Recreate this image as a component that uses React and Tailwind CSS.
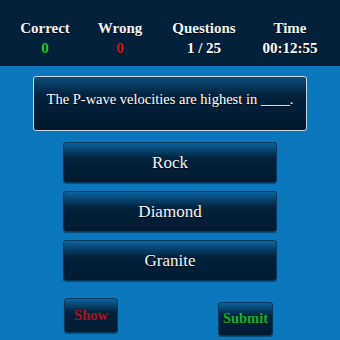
import React from 'react';

const stats = [
  { label: 'Correct', value: '0', color: 'text-[#19d11f]' },
  { label: 'Wrong', value: '0', color: 'text-[#e01010]' },
  { label: 'Questions', value: '1 / 25', color: 'text-white' },
  { label: 'Time', value: '00:12:55', color: 'text-white' },
];

const options = ['Rock', 'Diamond', 'Granite'];

function App() {
  return (
    <div className="w-[340px] h-[340px] overflow-hidden bg-[#0b77bd] font-['Liberation_Serif',serif]">
      {/* Header */}
      <div className="h-[66px] bg-[#03213b] border-b border-[#021628] grid grid-cols-[90px_60px_108px_64px] pt-[18px]">
        {stats.map((s) => (
          <div key={s.label} className="flex flex-col items-center font-bold text-[15px] leading-[20px] [text-shadow:0_1px_1px_rgba(0,0,0,0.7)]">
            <span className="text-[#f2f2f2]">{s.label}</span>
            <span className={s.color}>{s.value}</span>
          </div>
        ))}
      </div>

      {/* Question */}
      <div className="mx-[33px] mt-[10px] h-[55px] rounded-[3px] border border-[#c9d6e0] bg-gradient-to-b from-[#0a4d7c] via-[#03223d] via-35% to-[#02192d] flex pt-[12px] justify-center">
        <p className="text-white text-[14.5px] leading-[20px] [text-shadow:0_1px_1px_rgba(0,0,0,0.8)]">
          The P-wave velocities are highest in ____.
        </p>
      </div>

      {/* Options */}
      <div className="flex flex-col items-center gap-[8px] mt-[11px]">
        {options.map((o) => (
          <button
            key={o}
            className="w-[214px] h-[41px] rounded-[3px] border border-[#073a5f] bg-gradient-to-b from-[#0c64a0] via-[#03223d] via-40% to-[#021b31] text-[#f4f4f4] text-[17px] [text-shadow:0_1px_1px_rgba(0,0,0,0.8)] shadow-[0_1px_1px_rgba(0,0,0,0.35)]"
          >
            {o}
          </button>
        ))}
      </div>

      {/* Actions */}
      <div className="flex justify-between items-start w-[209px] ml-[64px] mt-[17px]">
        <button className="w-[54px] h-[35px] rounded-[3px] border border-[#073a5f] bg-gradient-to-b from-[#0c64a0] via-[#03223d] via-40% to-[#021b31] text-[#b0101c] font-bold text-[14.5px] shadow-[0_1px_1px_rgba(0,0,0,0.35)]">
          Show
        </button>
        <button className="mt-[4px] w-[55px] h-[34px] rounded-[3px] border border-[#073a5f] bg-gradient-to-b from-[#0c64a0] via-[#03223d] via-40% to-[#021b31] text-[#1ea82c] font-bold text-[14.5px] shadow-[0_1px_1px_rgba(0,0,0,0.35)]">
          Submit
        </button>
      </div>
    </div>
  );
}

export default App;
